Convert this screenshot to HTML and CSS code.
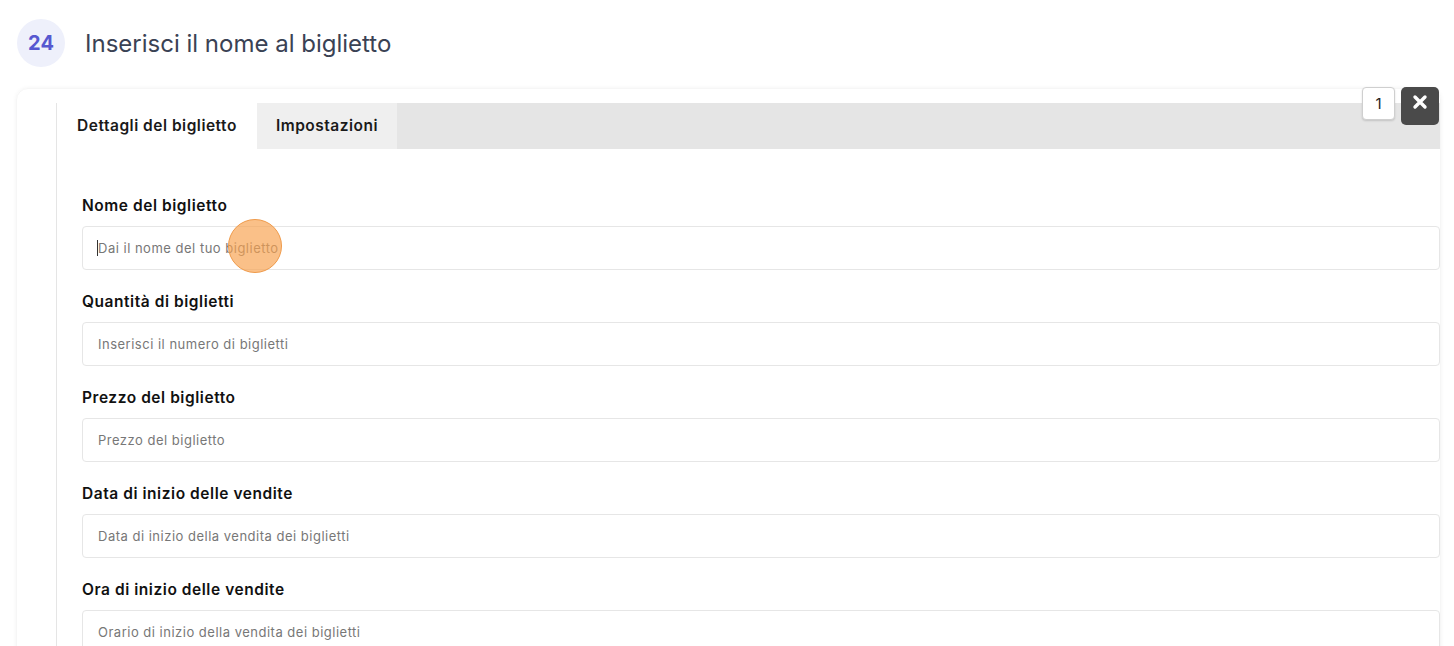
FILE: index.html
```html
<!DOCTYPE html>
<html lang="it">
<head>
    <meta charset="UTF-8">
    <meta name="viewport" content="width=device-width, initial-scale=1.0">
    <title>Inserisci il nome al biglietto</title>
    <link rel="stylesheet" href="styles.css">
</head>
<body>
    <div class="step">
        <div class="step_num">24</div>
        <h1 class="step_title">Inserisci il nome al biglietto</h1>
    </div>
    <div class="card">
        <div class="card_tools">
            <span class="count">1</span>
            <button class="close" type="button">
                <svg width="16" height="16" viewBox="0 0 16 16"><path d="M3 3 L13 13 M13 3 L3 13" stroke="#fff" stroke-width="3.4" stroke-linecap="round"/></svg>
            </button>
        </div>
        <div class="panel">
            <ul class="tabs">
                <li class="on">Dettagli del biglietto</li>
                <li>Impostazioni</li>
            </ul>
            <form class="fields">
                <div class="field">
                    <label>Nome del biglietto</label>
                    <div class="input_box">
                        <input type="text" placeholder="Dai il nome del tuo biglietto">
                        <span class="caret"></span>
                        <span class="click"></span>
                    </div>
                </div>
                <div class="field">
                    <label>Quantità di biglietti</label>
                    <div class="input_box"><input type="text" placeholder="Inserisci il numero di biglietti"></div>
                </div>
                <div class="field">
                    <label>Prezzo del biglietto</label>
                    <div class="input_box"><input type="text" placeholder="Prezzo del biglietto"></div>
                </div>
                <div class="field">
                    <label>Data di inizio delle vendite</label>
                    <div class="input_box"><input type="text" placeholder="Data di inizio della vendita dei biglietti"></div>
                </div>
                <div class="field">
                    <label>Ora di inizio delle vendite</label>
                    <div class="input_box"><input type="text" placeholder="Orario di inizio della vendita dei biglietti"></div>
                </div>
            </form>
        </div>
    </div>
</body>
</html>
```

FILE: styles.css
```css
* {margin: 0; padding: 0; box-sizing: border-box;}
html, body {height: 100%; overflow: hidden;}
body {
    background: #fff;
    font-family: Inter, "Open Sans", sans-serif;
}
.step {
    display: flex;
    align-items: center;
    gap: 20px;
    padding: 19px 0 0 17px;
    height: 67px;
}
.step_num {
    width: 48px;
    height: 48px;
    border-radius: 50%;
    background: #eef0fb;
    color: #5658d0;
    font-weight: 700;
    font-size: 20px;
    display: flex;
    align-items: center;
    justify-content: center;
}
.step_title {
    font-weight: 400;
    font-size: 24px;
    color: #3a4254;
    letter-spacing: 0;
}
.card {
    position: relative;
    margin: 21px 13px 0 16px;
    padding: 14px 0 0 39px;
    border-radius: 12px;
    box-shadow: 0 0 4px rgba(0,0,0,0.05);
    border: 1px solid #f6f6f6;
    height: 600px;
}
.card_tools {
    position: absolute;
    top: -2px;
    right: 1px;
    display: flex;
    gap: 6px;
    z-index: 5;
}
.count {
    width: 33px;
    height: 33px;
    border: 1px solid #cfcfcf;
    border-radius: 4px;
    background: #fff;
    box-shadow: 0 1px 2px rgba(0,0,0,0.15);
    font-size: 15px;
    color: #222;
    display: flex;
    align-items: center;
    justify-content: center;
}
.close {
    width: 38px;
    height: 38px;
    border: none;
    border-radius: 5px;
    background: #4a4a4a;
    display: flex;
    align-items: flex-start;
    justify-content: center;
    padding-top: 7px;
}
.panel {
    border-left: 1px solid #e5e5e5;
    height: 100%;
}
.tabs {
    list-style: none;
    display: flex;
    background: #e5e5e5;
    height: 46px;
}
.tabs li {
    height: 46px;
    line-height: 46px;
    font-size: 15.5px;
    font-weight: 600;
    color: #1a1a1a;
    background: #efefef;
    width: 140px;
    text-align: center;
    letter-spacing: 0.5px;
}
.tabs li.on {
    background: #fff;
    width: 200px;
}
.fields {
    padding: 45px 0 0 25px;
}
.field {
    margin-bottom: 20px;
}
.field label {
    display: block;
    font-size: 15.5px;
    font-weight: 600;
    color: #111;
    line-height: 24px;
    margin-bottom: 8px;
    letter-spacing: 0.55px;
}
.input_box {
    position: relative;
}
.input_box input {
    width: 100%;
    height: 44px;
    border: 1px solid #e6e6e6;
    border-radius: 4px;
    padding: 0 15px;
    font-family: inherit;
    font-size: 13px;
    color: #333;
    letter-spacing: 0.5px;
    outline: none;
}
.input_box input::placeholder {
    color: #777;
}
.caret {
    position: absolute;
    left: 15px;
    top: 14px;
    width: 1px;
    height: 16px;
    background: #333;
}
.click {
    position: absolute;
    left: 146px;
    top: -7px;
    width: 54px;
    height: 54px;
    border-radius: 50%;
    background: rgba(248, 162, 80, 0.68);
    border: 1.5px solid #ef9a4a;
}
```
